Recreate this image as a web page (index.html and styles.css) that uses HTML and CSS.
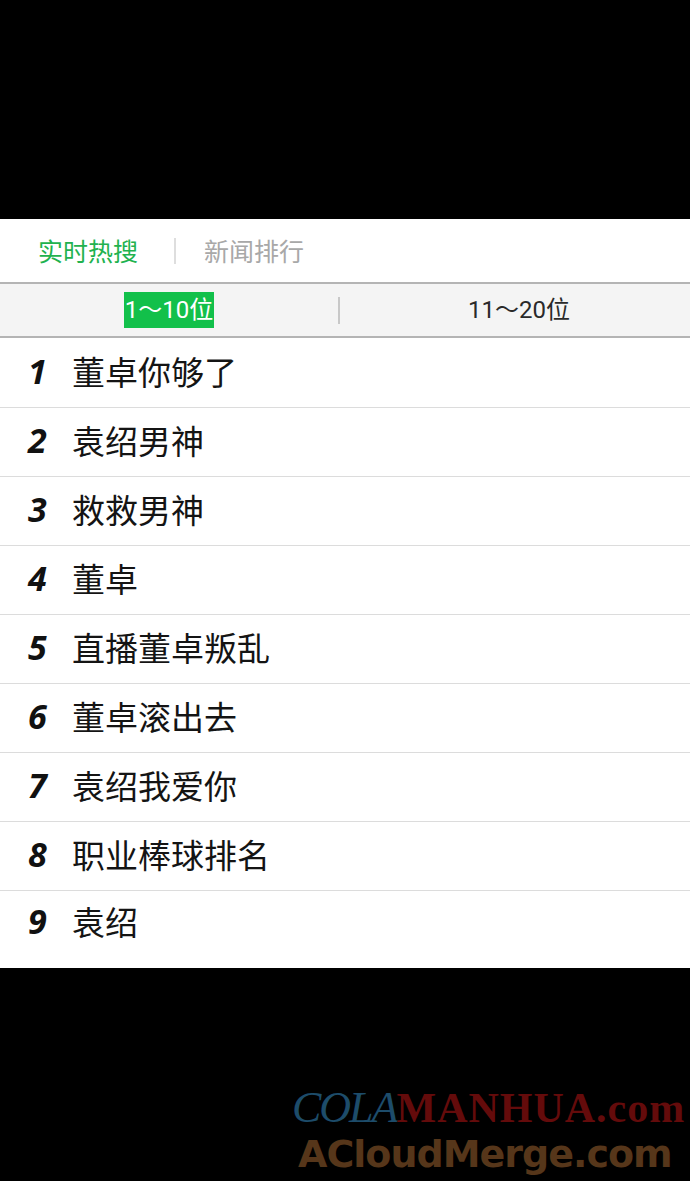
FILE: index.html
```html
<!DOCTYPE html>
<html lang="zh-CN">
<head>
    <meta charset="UTF-8">
    <meta name="viewport" content="width=device-width, initial-scale=1.0">
    <title>实时热搜</title>
    <link rel="stylesheet" href="styles.css">
</head>
<body>
    <div class="top-space"></div>

    <div class="panel">
        <div class="tabs">
            <span class="tab active">实时热搜</span>
            <span class="tab-sep"></span>
            <span class="tab">新闻排行</span>
        </div>

        <div class="subtabs">
            <div class="subtab left"><span class="selected">1～10位</span></div>
            <span class="subtab-sep"></span>
            <div class="subtab right"><span>11～20位</span></div>
        </div>

        <ul class="rank-list">
            <li class="first"><span class="num">1</span><span class="word">董卓你够了</span></li>
            <li><span class="num">2</span><span class="word">袁绍男神</span></li>
            <li><span class="num">3</span><span class="word">救救男神</span></li>
            <li><span class="num">4</span><span class="word">董卓</span></li>
            <li><span class="num">5</span><span class="word">直播董卓叛乱</span></li>
            <li><span class="num">6</span><span class="word">董卓滚出去</span></li>
            <li><span class="num">7</span><span class="word">袁绍我爱你</span></li>
            <li><span class="num">8</span><span class="word">职业棒球排名</span></li>
            <li class="last"><span class="num">9</span><span class="word">袁绍</span></li>
        </ul>
    </div>

    <div class="bottom-space">
        <div class="mark">
            <div class="mark-line1"><span class="cola">COLA</span><span class="manhua">MANHUA.com</span></div>
            <div class="mark-line2">ACloudMerge.com</div>
        </div>
    </div>
</body>
</html>
```

FILE: styles.css
```css
* {
    box-sizing: border-box;
    margin: 0;
    padding: 0;
}
body {
    background: #000;
    font-family: "Noto Sans CJK SC", "Noto Sans", sans-serif;
    width: 690px;
    height: 1181px;
    overflow: hidden;
}
.top-space {
    height: 219px;
}
.panel {
    background: #fff;
    height: 749px;
}

/* top tabs */
.tabs {
    height: 65px;
    display: flex;
    align-items: center;
    padding-left: 38px;
    border-bottom: 2px solid #b4b4b4;
}
.tab {
    font-size: 25px;
    color: #a8a8a8;
    line-height: 1;
}
.tab.active {
    color: #21b24e;
}
.tab-sep {
    width: 2px;
    height: 26px;
    background: #dedede;
    margin: 0 28px 0 36px;
}

/* range switch */
.subtabs {
    height: 54px;
    display: flex;
    align-items: center;
    background: #f4f4f4;
    border-bottom: 2px solid #b4b4b4;
}
.subtab {
    flex: 1;
    display: flex;
    justify-content: center;
    font-family: Roboto, "Noto Sans CJK SC", sans-serif;
    font-size: 24px;
    color: #2a2a2a;
}
.subtab.left {
    flex: none;
    width: 338px;
}
.subtab.right {
    padding-left: 8px;
}
.subtab span {
    display: block;
    height: 36px;
    line-height: 36px;
    padding: 0 1px;
}
.subtab .selected {
    background: #12c04a;
    color: #fff;
}
.subtab-sep {
    width: 2px;
    height: 27px;
    background: #c8c8c8;
}

/* ranking rows */
.rank-list {
    list-style: none;
}
.rank-list li {
    height: 69px;
    display: flex;
    align-items: center;
    border-bottom: 1px solid #dcdcdc;
    padding-left: 28px;
    padding-bottom: 4px;
}
.rank-list li.first {
    height: 70px;
}
.rank-list li.last {
    border-bottom: none;
    height: 77px;
    padding-bottom: 18px;
}
.num {
    width: 44px;
    font-family: "Open Sans", sans-serif;
    font-weight: 700;
    font-style: italic;
    font-size: 34px;
    color: #111;
}
.word {
    font-size: 33px;
    color: #141414;
}

/* watermark */
.bottom-space {
    height: 213px;
    display: flex;
    justify-content: flex-end;
    padding-top: 120px;
}
.mark {
    width: 400px;
    padding-left: 2px;
}
.mark-line1 {
    line-height: 40px;
    white-space: nowrap;
}
.cola {
    font-family: "Liberation Serif", serif;
    font-style: italic;
    font-size: 44px;
    color: #1d4c6a;
    letter-spacing: -2px;
}
.manhua {
    font-family: "Liberation Serif", serif;
    font-weight: 700;
    font-size: 42px;
    color: #640b0b;
    letter-spacing: 1px;
}
.mark-line2 {
    padding-left: 6px;
    font-family: "DejaVu Sans", sans-serif;
    font-weight: 700;
    font-size: 38px;
    color: #56361a;
    line-height: 38px;
    white-space: nowrap;
    letter-spacing: -1px;
}
```
